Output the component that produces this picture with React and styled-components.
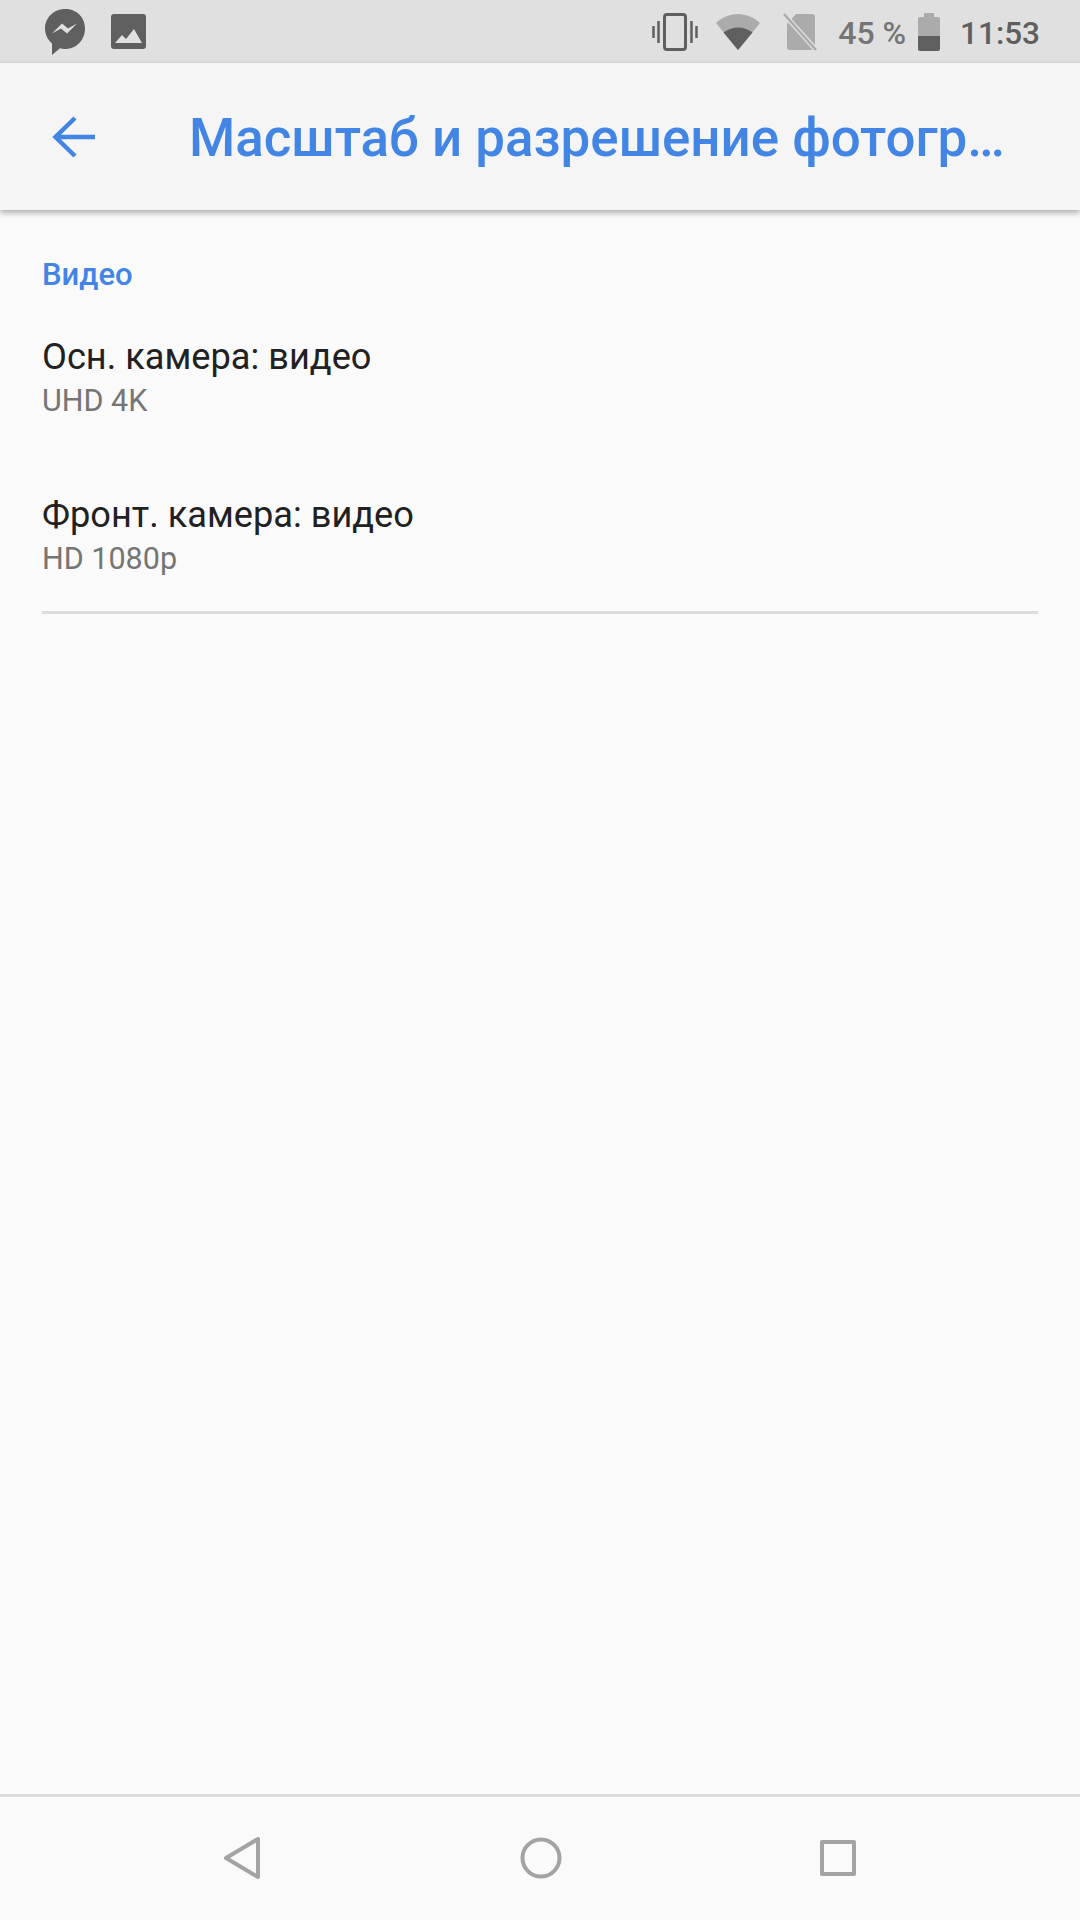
import React from 'react'
import styled, { createGlobalStyle } from 'styled-components'

const Global = createGlobalStyle`
  html, body {
    margin: 0;
    padding: 0;
    background: #fafafa;
  }
`

const Screen = styled.div`
  width: 1080px;
  height: 1920px;
  display: flex;
  flex-direction: column;
  background: #fafafa;
  font-family: Roboto, "Noto Sans", sans-serif;
  overflow: hidden;
`

const StatusBar = styled.div`
  height: 63px;
  flex: none;
  display: flex;
  align-items: center;
  justify-content: space-between;
  padding: 0 40px 0 45px;
  background: #e0e0e0;
  color: #5f5f5f;
`

const StatusGroup = styled.div`
  display: flex;
  align-items: center;
`

const StatusText = styled.span`
  font-size: ${p => p.$size}px;
  font-weight: 500;
  line-height: 63px;
  padding-top: 4px;
  margin: 0 ${p => p.$right}px 0 ${p => p.$left}px;
  color: ${p => p.$color};
  white-space: nowrap;
`

const Glyph = styled.svg`
  display: block;
  flex: none;
  margin-left: ${p => p.$left || 0}px;
`

const AppBar = styled.header`
  height: 147px;
  flex: none;
  display: flex;
  align-items: center;
  background: #f5f5f5;
  box-shadow: 0 3px 6px rgba(0, 0, 0, 0.3);
  position: relative;
`

const BackButton = styled.div`
  width: 189px;
  flex: none;
  padding-left: 52px;
  box-sizing: border-box;
`

const Title = styled.h1`
  margin: 0;
  padding-top: 3px;
  font-size: 52.9px;
  font-weight: 500;
  color: #4285e4;
  white-space: nowrap;
`

const Content = styled.main`
  flex: 1;
  padding: 0 42px;
`

const SectionLabel = styled.div`
  padding-top: 44px;
  font-size: 31px;
  line-height: 41px;
  font-weight: 500;
  color: #4285e4;
`

const Row = styled.div`
  height: 158px;
  box-sizing: border-box;
  padding-top: 39px;
`

const RowTitle = styled.div`
  font-size: 36.2px;
  line-height: 45px;
  color: #212121;
`

const RowValue = styled.div`
  font-size: 30.5px;
  line-height: 44px;
  color: #757575;
`

const Divider = styled.div`
  height: 3px;
  background: #dcdcdc;
`

const NavBar = styled.nav`
  height: 126px;
  flex: none;
  display: grid;
  grid-template-columns: 224px 296px 300px 1fr;
  align-items: center;
  border-top: 3px solid #dcdcdc;
  box-sizing: border-box;
  padding-bottom: 2px;
`

const NavSlot = styled.div`
  grid-column: ${p => p.$col};
`

const NavIcon = styled.svg`
  display: block;
  fill: none;
  stroke: #a3a3a3;
  stroke-width: 4;
  stroke-linejoin: round;
`

const Messenger = () => (
  <Glyph width="40" height="46" viewBox="0 0 40 46">
    <path fill="#5f5f5f" d="M20 0C9 0 0 8.6 0 19.5c0 6 2.7 11.3 7 14.8V46l8-6.8c1.6.4 3.3.8 5 .8 11 0 20-8.6 20-20.5S31 0 20 0z" />
    <path fill="#e0e0e0" d="M7 24.5l10-10 6 5 9-5-10 10-6-5z" />
  </Glyph>
)

const ImageIcon = () => (
  <Glyph $left={26} width="35" height="35" viewBox="0 0 35 35">
    <rect width="35" height="35" rx="3" fill="#5f5f5f" />
    <path fill="#e0e0e0" d="M4 29l7-8 4 4 8-10 8 14z" />
  </Glyph>
)

const VibrateIcon = () => (
  <Glyph width="46" height="38" viewBox="0 0 46 38" fill="none" stroke="#5f5f5f">
    <rect x="12.5" y="1.5" width="21" height="35" rx="2.5" strokeWidth="3" />
    <path strokeWidth="2.5" d="M6.5 8v22M1.5 13v12M39.5 8v22M44.5 13v12" />
  </Glyph>
)

const WifiIcon = () => (
  <Glyph $left={18} width="44" height="36" viewBox="0 0 44 36">
    <path fill="#ababab" d="M0 9C6 3.5 13.5 0 22 0s16 3.5 22 9L22 36z" />
    <path fill="#5f5f5f" d="M7.5 18.5C11.5 15.5 16.5 13.5 22 13.5s10.5 2 14.5 5L22 36z" />
  </Glyph>
)

const NoSimIcon = () => (
  <Glyph $left={23} width="34" height="38" viewBox="0 0 34 38">
    <path fill="#ababab" d="M13 1h16a3 3 0 0 1 3 3v30a3 3 0 0 1-3 3H7a3 3 0 0 1-3-3V11z" />
    <path stroke="#e0e0e0" strokeWidth="5" d="M0 0l34 38" />
    <path stroke="#ababab" strokeWidth="2.5" d="M1 1l32 36" />
  </Glyph>
)

const BatteryIcon = () => (
  <Glyph width="22" height="38" viewBox="0 0 22 38">
    <path fill="#ababab" d="M6 0h10v4h4a2 2 0 0 1 2 2v17H0V6a2 2 0 0 1 2-2h4z" />
    <path fill="#5f5f5f" d="M0 23h22v13a2 2 0 0 1-2 2H2a2 2 0 0 1-2-2z" />
  </Glyph>
)

const BackArrow = () => (
  <Glyph width="44" height="42" viewBox="0 0 44 42" fill="none" stroke="#4285e4" strokeWidth="4.5">
    <path d="M43 21H4M23 2L3.5 21 23 40" />
  </Glyph>
)

const rows = [
  { title: 'Осн. камера: видео', value: 'UHD 4K' },
  { title: 'Фронт. камера: видео', value: 'HD 1080p' },
]

export default function App() {
  return (
    <Screen>
      <Global />
      <StatusBar>
        <StatusGroup>
          <Messenger />
          <ImageIcon />
        </StatusGroup>
        <StatusGroup>
          <VibrateIcon />
          <WifiIcon />
          <NoSimIcon />
          <StatusText $size={32} $left={21} $right={12} $color="#757575">45 %</StatusText>
          <BatteryIcon />
          <StatusText $size={31.5} $left={20} $right={0} $color="#5f5f5f">11:53</StatusText>
        </StatusGroup>
      </StatusBar>

      <AppBar>
        <BackButton><BackArrow /></BackButton>
        <Title>Масштаб и разрешение фотогр…</Title>
      </AppBar>

      <Content>
        <SectionLabel>Видео</SectionLabel>
        {rows.map(r => (
          <Row key={r.title}>
            <RowTitle>{r.title}</RowTitle>
            <RowValue>{r.value}</RowValue>
          </Row>
        ))}
        <Divider />
      </Content>

      <NavBar>
        <NavSlot $col={2}>
          <NavIcon width="36" height="42" viewBox="0 0 36 42">
            <path d="M34 2v38L2 21z" />
          </NavIcon>
        </NavSlot>
        <NavSlot $col={3}>
          <NavIcon width="42" height="42" viewBox="0 0 42 42">
            <circle cx="21" cy="21" r="18.5" />
          </NavIcon>
        </NavSlot>
        <NavSlot $col={4}>
          <NavIcon width="36" height="36" viewBox="0 0 36 36">
            <rect x="2" y="2" width="32" height="32" />
          </NavIcon>
        </NavSlot>
      </NavBar>
    </Screen>
  )
}
